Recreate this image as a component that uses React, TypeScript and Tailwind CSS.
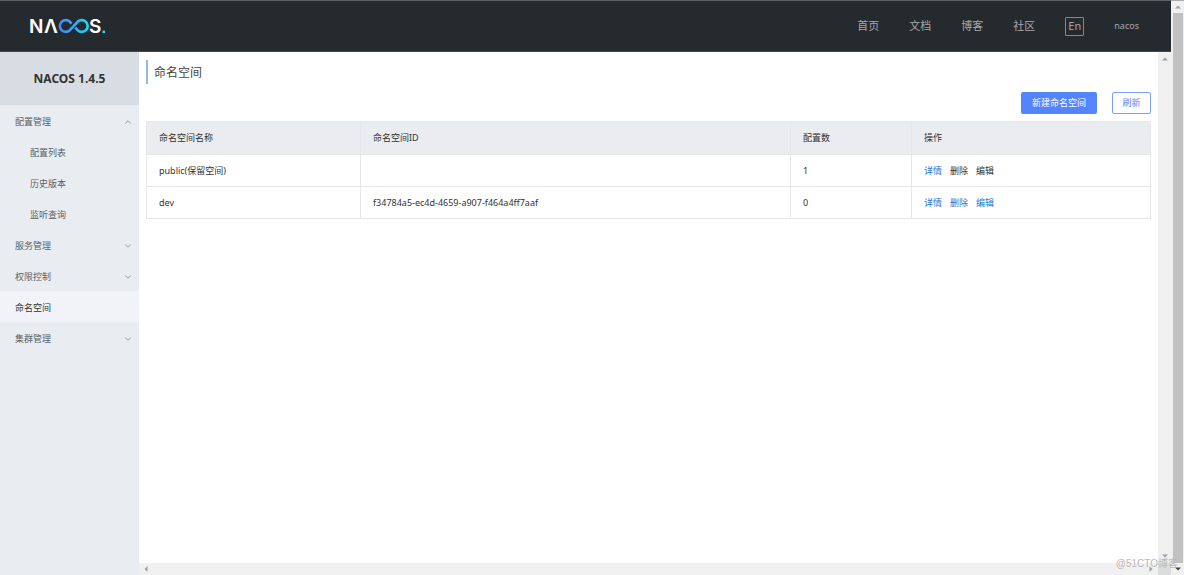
import { useState } from "react";
import { ChevronDown, ChevronUp } from "lucide-react";

const navLinks = ["首页", "文档", "博客", "社区"];

const menu = [
  { name: "配置管理", children: ["配置列表", "历史版本", "监听查询"] },
  { name: "服务管理", children: ["服务列表", "订阅者列表"] },
  { name: "权限控制", children: ["用户列表", "角色管理", "权限管理"] },
  { name: "命名空间" },
  { name: "集群管理", children: ["节点列表"] },
];

const namespaces = [
  { name: "public(保留空间)", id: "", count: 1, reserved: true },
  { name: "dev", id: "f34784a5-ec4d-4659-a907-f464a4ff7aaf", count: 0, reserved: false },
];

const cellClass = "border border-[#e6e7eb] px-3 text-left font-normal";

function Logo() {
  return (
    <svg width="80" height="28" viewBox="-2 -5 80 28" role="img" aria-label="NACOS">
      <defs>
        <linearGradient id="loop" gradientUnits="userSpaceOnUse" x1="28" y1="0" x2="59" y2="0">
          <stop offset="0" stopColor="#3c8cfb" />
          <stop offset="0.45" stopColor="#3fa0fb" />
          <stop offset="1" stopColor="#14e0f5" />
        </linearGradient>
      </defs>
      <g className="font-['Inter',sans-serif] text-[19px] font-semibold" fill="#fff">
        <text x="-1" y="16">N</text>
        <text x="14" y="16">Λ</text>
        <text x="59" y="16">S</text>
      </g>
      <path
        d="M41.5 6.6 L39.9 4.8 A5.9 5.9 0 1 0 39.9 13.2 L47.6 4.8 A5.9 5.9 0 1 1 47.6 13.2 L45.3 10.700"
        fill="none"
        stroke="url(#loop)"
        strokeWidth="2.6"
      />
      <rect x="72.500" y="13.500" width="2.600" height="2.600" rx=".6" fill="#14e0f5" />
    </svg>
  );
}

function Arrow({ className }: { className?: string }) {
  return (
    <svg width="6" height="4" viewBox="0 0 6 4" className={className} aria-hidden="true">
      <path d="M0 3.500 3 .5l3 3z" fill="currentColor" />
    </svg>
  );
}

function Header() {
  return (
    <header className="flex h-[52px] shrink-0 items-center justify-between border-t border-b border-t-[#5c6063] border-b-[#43474a] bg-[#252a2f] pr-8 pl-7 text-[#a5a7a9]">
      <a href="#home">
        <Logo />
      </a>
      <nav className="flex items-center gap-[30px] text-[11px]">
        {navLinks.map((link) => (
          <a key={link} href="#nav" className="hover:text-white">
            {link}
          </a>
        ))}
        <button className="h-[19px] w-[19px] rounded-[1px] border border-[#85888b] text-[11px] leading-4">En</button>
        <a href="#user" className="text-[9px]">
          nacos
        </a>
      </nav>
    </header>
  );
}

function Sidebar() {
  const [open, setOpen] = useState(["配置管理"]);

  function toggle(name: string) {
    setOpen(open.includes(name) ? open.filter((n) => n !== name) : [...open, name]);
  }

  return (
    <aside className="w-[139px] shrink-0 bg-[#e9edf2] text-[#5c5f63]">
      <h1 className="flex h-[53px] items-center justify-center bg-[#d8dde4] text-[12px] font-bold text-[#333]">
        NACOS 1.4.5
      </h1>
      <ul>
        {menu.map((item) => (
          <li key={item.name}>
            {item.children ? (
              <button
                className="flex h-[31px] w-full items-center justify-between pt-[2px] pr-[6px] pl-[15px]"
                onClick={() => toggle(item.name)}
              >
                {item.name}
                {open.includes(item.name) ? (
                  <ChevronUp size={10} strokeWidth={2} className="text-[#85888d]" />
                ) : (
                  <ChevronDown size={10} strokeWidth={2} className="text-[#85888d]" />
                )}
              </button>
            ) : (
              <a href="#namespace" className="flex h-[31px] items-center bg-[#f1f3f8] pt-[2px] pl-[15px] text-[#333]">
                {item.name}
              </a>
            )}
            {item.children && open.includes(item.name) && (
              <ul>
                {item.children.map((child) => (
                  <li key={child}>
                    <a href="#config" className="flex h-[31px] items-center pt-[2px] pl-[30px]">
                      {child}
                    </a>
                  </li>
                ))}
              </ul>
            )}
          </li>
        ))}
      </ul>
    </aside>
  );
}

function NamespaceTable() {
  return (
    <table className="mt-[7px] w-full table-fixed border-collapse text-[#333]">
      <colgroup>
        <col className="w-[214px]" />
        <col />
        <col className="w-[121px]" />
        <col className="w-[239px]" />
      </colgroup>
      <thead>
        <tr className="h-[33px] bg-[#ebecf0]">
          <th className={cellClass}>命名空间名称</th>
          <th className={cellClass}>命名空间ID</th>
          <th className={cellClass}>配置数</th>
          <th className={cellClass}>操作</th>
        </tr>
      </thead>
      <tbody>
        {namespaces.map((ns) => (
          <tr key={ns.name} className="h-8">
            <td className={cellClass}>{ns.name}</td>
            <td className={cellClass}>{ns.id}</td>
            <td className={cellClass}>{ns.count}</td>
            <td className={cellClass}>
              <div className="flex gap-2">
                <a href="#detail" className="text-[#1b76d2]">
                  详情
                </a>
                {["删除", "编辑"].map((action) =>
                  ns.reserved ? (
                    <span key={action}>{action}</span>
                  ) : (
                    <a key={action} href="#action" className="text-[#1b76d2]">
                      {action}
                    </a>
                  )
                )}
              </div>
            </td>
          </tr>
        ))}
      </tbody>
    </table>
  );
}

export default function App() {
  return (
    <div className="relative flex h-screen overflow-hidden bg-white font-['Noto_Sans','Noto_Sans_CJK_SC',sans-serif] text-[9px]">
      <div className="flex min-w-0 flex-1 flex-col">
        <Header />
        <div className="flex min-h-0 flex-1">
          <Sidebar />
          <div className="flex min-w-0 flex-1 flex-col">
            <div className="flex min-h-0 flex-1">
              <main className="min-w-0 flex-1 px-[7px] pt-2">
                <h2 className="h-6 border-l-2 border-[#8fb9e3] pl-[6px] text-[12px] leading-[26px] text-[#444]">
                  命名空间
                </h2>
                <div className="mt-2 flex justify-end gap-[15px]">
                  <button className="h-[22px] w-[76px] rounded-[2px] bg-[#5584ff] text-white">新建命名空间</button>
                  <button className="h-[22px] w-[39px] rounded-[2px] border border-[#7c9fff] text-[#5584ff]">刷新</button>
                </div>
                <NamespaceTable />
              </main>
              <div className="flex w-[13px] flex-col items-center justify-between bg-[#f0f0f0] py-[5px] text-[#a0a0a0]">
                <Arrow />
                <Arrow className="rotate-180" />
              </div>
            </div>
            <div className="flex h-3 shrink-0 bg-[#f0f0f0] text-[#a0a0a0]">
              <div className="flex flex-1 items-center justify-between px-1">
                <Arrow className="-rotate-90" />
                <Arrow className="rotate-90" />
              </div>
              <div className="w-[13px] bg-[#dcdcdc]" />
            </div>
          </div>
        </div>
      </div>
      <div className="flex w-[13px] shrink-0 flex-col items-center border-t border-[#a9abac] bg-[#f0f0f0]">
        <Arrow className="my-1 text-[#a0a0a0]" />
        <div className="w-[10px] flex-1 bg-[#c1c1c1]" />
        <Arrow className="my-1 rotate-180 text-[#444]" />
      </div>
      <span className="absolute right-[6px] bottom-[3px] font-['Liberation_Sans','Noto_Sans_CJK_SC',sans-serif] text-[10px] leading-4 text-[#b9b9b9]">
        @51CTO博客
      </span>
    </div>
  );
}
